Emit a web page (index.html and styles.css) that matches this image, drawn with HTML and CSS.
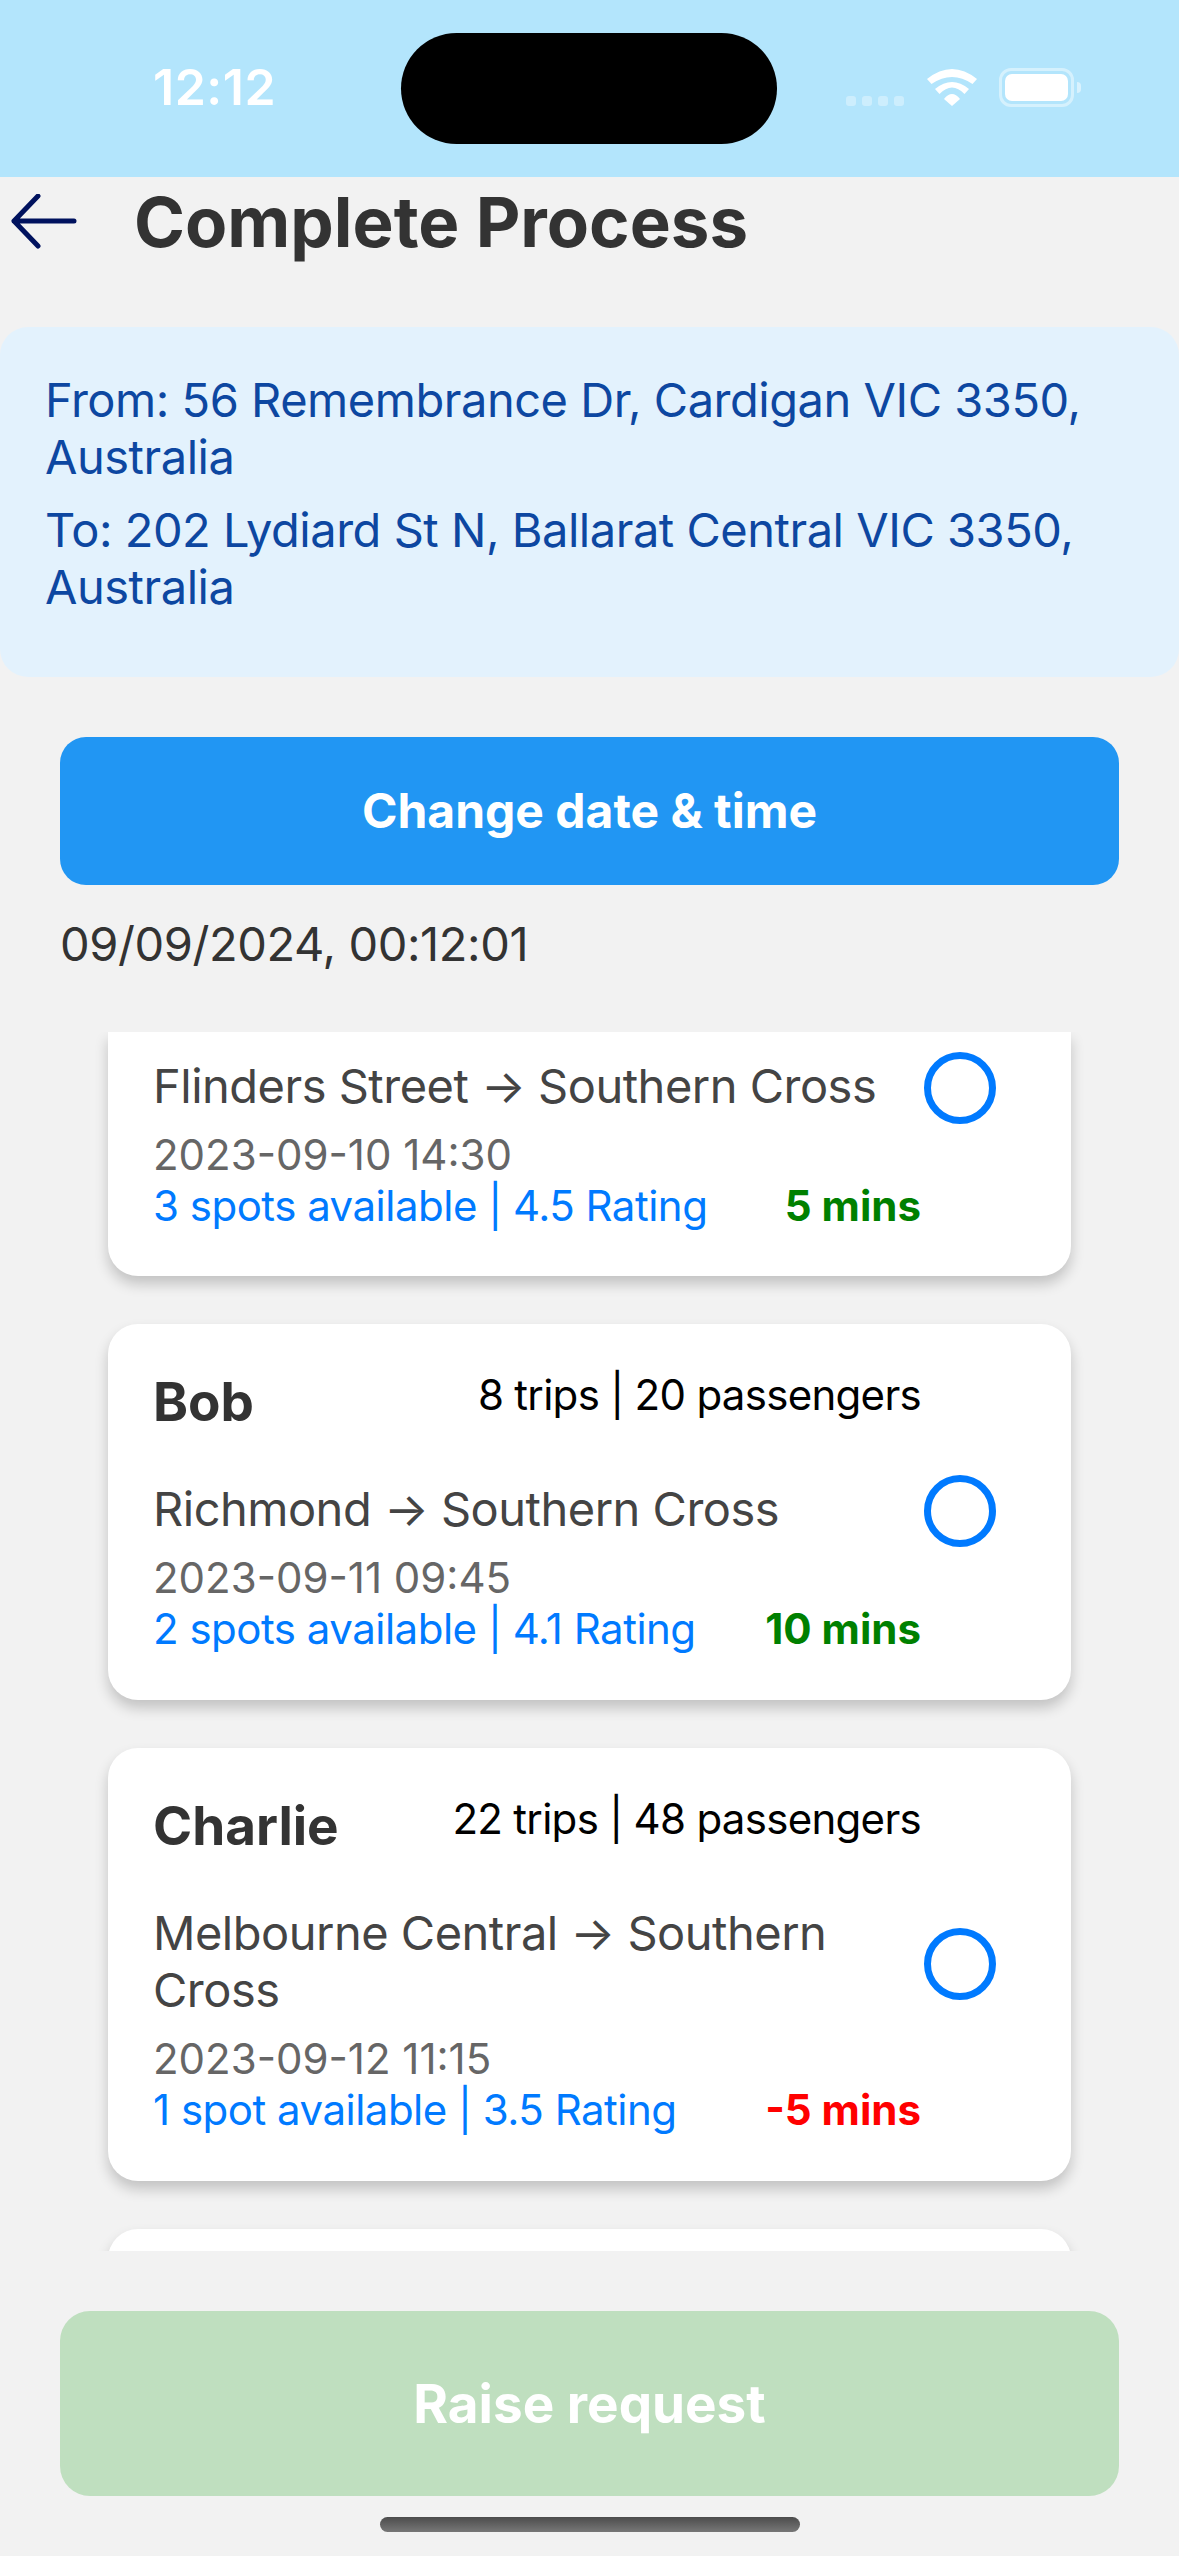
FILE: index.html
```html
<!DOCTYPE html>
<html lang="en">
<head>
  <meta charset="UTF-8">
  <title>Complete Process</title>
  <link rel="stylesheet" href="styles.css">
</head>
<body>
  <div class="status-bar">
    <span class="time">12:12</span>
    <div class="island"></div>
    <div class="status-icons">
      <div class="cell"><i></i><i></i><i></i><i></i></div>
      <svg class="wifi" width="50" height="37" viewBox="0 0 50 37">
        <path d="M0 10 Q25 -10 50 10 L45.500 15 Q25 1 4.500 15 Z" fill="#fff"/>
        <path d="M8 20 Q25 6 42 20 L37.500 25 Q25 12 12.500 25 Z" fill="#fff"/>
        <path d="M17 30 Q25 20 33 30 L25 37 Z" fill="#fff"/>
      </svg>
      <div class="battery"><div class="battery-fill"></div></div>
      <div class="battery-nub"></div>
    </div>
  </div>

  <header class="page-head">
    <svg class="back" width="70" height="56" viewBox="0 0 70 56">
      <path d="M65 27 H5 M29 2 L5 27 L29 52" fill="none" stroke="#00125e" stroke-width="5" stroke-linecap="round" stroke-linejoin="round"/>
    </svg>
    <h1>Complete Process</h1>
  </header>

  <section class="address">
    <p>From: 56 Remembrance Dr, Cardigan VIC 3350, Australia</p>
    <p>To: 202 Lydiard St N, Ballarat Central VIC 3350, Australia</p>
  </section>

  <button class="btn btn-blue">Change date &amp; time</button>
  <div class="date-value">09/09/2024, 00:12:01</div>

  <div class="trip-list">
    <div class="card card-cut">
      <div class="route-row">
        <div class="route">Flinders Street → Southern Cross</div>
        <div class="radio"></div>
      </div>
      <div class="when">2023-09-10 14:30</div>
      <div class="info-row">
        <span class="spots">3 spots available | 4.5 Rating</span>
        <span class="mins ok">5 mins</span>
      </div>
    </div>

    <div class="card">
      <div class="name-row">
        <span class="name">Bob</span>
        <span class="stats">8 trips | 20 passengers</span>
      </div>
      <div class="route-row">
        <div class="route">Richmond → Southern Cross</div>
        <div class="radio"></div>
      </div>
      <div class="when">2023-09-11 09:45</div>
      <div class="info-row">
        <span class="spots">2 spots available | 4.1 Rating</span>
        <span class="mins ok">10 mins</span>
      </div>
    </div>

    <div class="card">
      <div class="name-row">
        <span class="name">Charlie</span>
        <span class="stats">22 trips | 48 passengers</span>
      </div>
      <div class="route-row">
        <div class="route">Melbourne Central → Southern Cross</div>
        <div class="radio"></div>
      </div>
      <div class="when">2023-09-12 11:15</div>
      <div class="info-row">
        <span class="spots">1 spot available | 3.5 Rating</span>
        <span class="mins late">-5 mins</span>
      </div>
    </div>

    <div class="card card-next"></div>
  </div>

  <button class="btn btn-green">Raise request</button>
  <div class="home-bar"></div>
</body>
</html>
```

FILE: styles.css
```css
* {
  box-sizing: border-box;
}
body {
  margin: 0;
  width: 1179px;
  height: 2556px;
  overflow: hidden;
  background: #f2f2f2;
  font-family: Inter, "Liberation Sans", sans-serif;
  color: #333;
}
.status-bar {
  height: 177px;
  background: #b3e5fc;
  display: grid;
  grid-template-columns: 401px 376px 1fr;
  color: #fff;
}
.time {
  padding: 62px 0 0 153px;
  font-size: 50px;
  font-weight: 600;
  line-height: 50px;
  letter-spacing: 0.5px;
}
.island {
  margin-top: 33px;
  height: 111px;
  background: #000;
  border-radius: 56px;
}
.status-icons {
  display: flex;
  align-items: flex-end;
  height: 107px;
  padding-left: 69px;
}
.cell {
  display: flex;
  gap: 6px;
  width: 58px;
  margin-bottom: 1px;
}
.cell i {
  width: 10px;
  height: 10px;
  border-radius: 3px;
  background: rgba(255,255,255,0.35);
}
.wifi {
  margin: 0 0 1px 23px;
}
.battery {
  margin-left: 22px;
  width: 75px;
  height: 39px;
  border: 3px solid rgba(255,255,255,0.45);
  border-radius: 12px;
  padding: 3px;
}
.battery-fill {
  height: 100%;
  background: #fff;
  border-radius: 7px;
}
.battery-nub {
  width: 4px;
  height: 11px;
  margin: 0 0 14px 3px;
  background: rgba(255,255,255,0.5);
  border-radius: 0 5px 5px 0;
}
.page-head {
  height: 150px;
  display: flex;
  align-items: flex-start;
  padding: 17px 0 0 9px;
}
.back {
  flex: none;
}
.page-head h1 {
  margin: -10px 0 0 55px;
  font-size: 69px;
  line-height: 76px;
  font-weight: 700;
}
.address {
  height: 350px;
  padding: 44px 45px 0;
  background: #e3f2fd;
  border-radius: 28px;
  color: #0d47a1;
  font-size: 47px;
  line-height: 57px;
  letter-spacing: -0.47px;
}
.address p {
  margin: 0 0 16px;
}
.btn {
  display: block;
  width: 1059px;
  margin: 0 auto;
  border: none;
  color: #fff;
  font-family: inherit;
  font-weight: 700;
}
.btn-blue {
  margin-top: 60px;
  height: 148px;
  padding-bottom: 3px;
  background: #2196f3;
  border-radius: 26px;
  font-size: 48px;
}
.date-value {
  padding: 30px 0 0 60px;
  height: 147px;
  font-size: 47px;
  line-height: 57px;
  letter-spacing: -0.4px;
}
.trip-list {
  height: 1219px;
  overflow: hidden;
  padding: 0 108px;
}
.card {
  background: #fff;
  border-radius: 30px;
  box-shadow: 0 8px 14px rgba(0,0,0,0.2);
  padding: 43px 46px 45px 45px;
  margin-bottom: 48px;
}
.card-cut {
  padding-top: 20px;
  padding-bottom: 44px;
  border-radius: 0 0 30px 30px;
}
.card-next {
  height: 200px;
}
.name-row {
  display: flex;
  justify-content: space-between;
  width: 768px;
  height: 108px;
}
.name {
  font-size: 53px;
  font-weight: 700;
  line-height: 70px;
}
.stats {
  font-size: 42px;
  line-height: 56px;
  letter-spacing: -0.7px;
  color: #000;
}
.route-row {
  display: flex;
  align-items: center;
  justify-content: space-between;
  width: 843px;
}
.route {
  width: 740px;
  padding: 5px 0 10px;
  font-size: 47px;
  line-height: 57px;
  letter-spacing: -0.5px;
  color: #444;
}
.radio {
  flex: none;
  width: 72px;
  height: 72px;
  border: 7px solid #007aff;
  border-radius: 50%;
}
.when {
  margin-top: 6px;
  font-size: 42px;
  line-height: 50px;
  color: #666;
}
.info-row {
  display: flex;
  justify-content: space-between;
  width: 768px;
  font-size: 42px;
  line-height: 52px;
}
.spots {
  color: #007aff;
  letter-spacing: -0.5px;
}
.mins {
  font-weight: 700;
}
.ok {
  color: #008000;
}
.late {
  color: #f00;
}
.btn-green {
  margin-top: 60px;
  height: 185px;
  background: #bfdfbf;
  border-radius: 30px;
  font-size: 53px;
}
.home-bar {
  width: 420px;
  height: 15px;
  margin: 21px auto 0;
  border-radius: 8px;
  background: linear-gradient(#4c4c4c, #777);
}
```
